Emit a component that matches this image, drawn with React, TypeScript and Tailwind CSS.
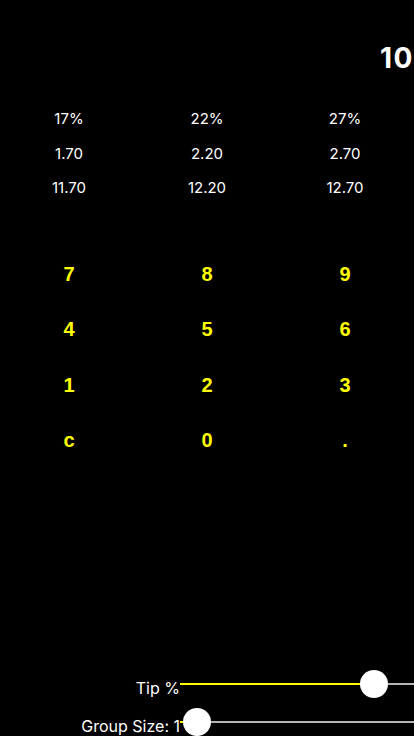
const tips = [
  ["17%", "22%", "27%"],
  ["1.70", "2.20", "2.70"],
  ["11.70", "12.20", "12.70"],
];

const keys = [
  ["7", "8", "9"],
  ["4", "5", "6"],
  ["1", "2", "3"],
  ["c", "0", "."],
];

function Slider({ label, thumb }: { label: string; thumb: number }) {
  return (
    <div className="flex h-7 items-start">
      <div className="w-[180px] shrink-0 pt-1 text-right font-['Inter',sans-serif] text-[16px] leading-7 text-white">
        {label}
      </div>
      <div className="relative h-7 w-[300px] shrink-0">
        <div className="absolute left-0 right-0 top-[13px] h-[2px] bg-[#b4b4b4]" />
        <div
          className="absolute left-0 top-[13px] h-[2px] bg-[#ffff00]"
          style={{ width: thumb }}
        />
        <div
          className="absolute top-0 h-7 w-7 rounded-full bg-white shadow"
          style={{ left: thumb - 14 }}
        />
      </div>
    </div>
  );
}

export default function App() {
  return (
    <div
      className="relative flex h-[736px] w-[414px] flex-col overflow-hidden bg-black"
      style={{ fontFamily: '"Liberation Sans", Arial, sans-serif' }}
    >
      <div className="mt-[44px] text-right font-['Inter',sans-serif] text-[28px] font-bold leading-none tracking-[1.5px] text-white">
        10
      </div>

      <div className="mt-[30px] flex flex-col font-['Inter',sans-serif]">
        {tips.map((row, i) => (
          <div key={i} className="grid grid-cols-3 text-center text-[15px] leading-[34.5px] text-white">
            {row.map((t) => (
              <div key={t}>{t}</div>
            ))}
          </div>
        ))}
      </div>

      <div className="mt-[41px] flex flex-col">
        {keys.map((row, i) => (
          <div key={i} className="grid grid-cols-3 text-center text-[20px] font-bold leading-[55.5px] text-[#ffff00]">
            {row.map((k) => (
              <div key={k}>{k}</div>
            ))}
          </div>
        ))}
      </div>

      <div className="mt-auto flex flex-col gap-[10px]">
        <Slider label="Tip %" thumb={194} />
        <Slider label="Group Size: 1" thumb={17} />
      </div>
    </div>
  );
}
